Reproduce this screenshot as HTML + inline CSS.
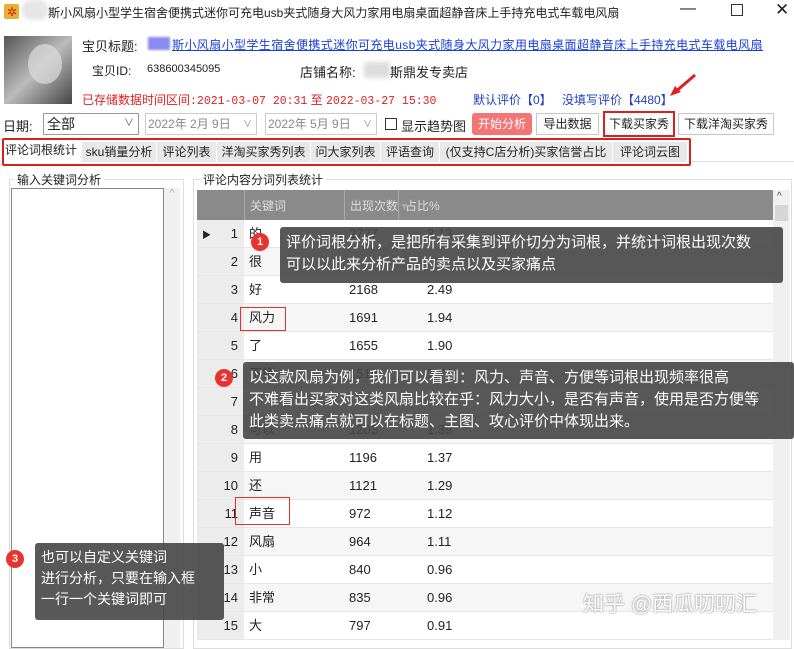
<!DOCTYPE html>
<html><head><meta charset="utf-8"><style>
*{box-sizing:border-box;margin:0;padding:0}
body{width:794px;height:636px;overflow:hidden;background:#fff;font-family:"Liberation Sans","Noto Sans CJK SC",sans-serif;font-size:12px;color:#222;position:relative}
.a{position:absolute;white-space:nowrap}
.btn{position:absolute;height:22px;border:1px solid #c8c8c8;background:#fdfdfd;text-align:center;line-height:20px;font-size:12px}
.tab{position:absolute;top:142px;height:20px;background:#e8e8e8;border-right:1px solid #fff;line-height:20px;font-size:12px;text-align:center}
.row{position:absolute;left:197px;width:576px;height:28px;border-bottom:1px solid #e6e6e6}
.row .n{position:absolute;left:0;width:47px;height:27px;background:#ececec;text-align:right;padding-right:6px;line-height:27px;font-size:13px}
.row .k{position:absolute;left:52px;line-height:27px;font-size:13px}
.row .c{position:absolute;left:152px;line-height:27px;font-size:13px}
.row .p{position:absolute;left:230px;line-height:27px;font-size:13px}
.tip{position:absolute;background:rgba(70,70,70,.9);color:#fff;font-size:15px;line-height:22px;border-radius:3px;padding:5px 6px}
.bd{position:absolute;width:18px;height:18px;border-radius:50%;background:#e8342e;color:#fff;font-size:11px;text-align:center;line-height:18px;font-weight:bold}
</style></head><body>
<div class="a" style="left:4px;top:4px;width:15px;height:15px;background:#e8b030;border-radius:2px"></div>
<div class="a" style="left:7px;top:5px;color:#d02020;font-size:12px">✲</div>
<div class="a" style="left:22px;top:0;width:26px;height:20px;background:#e6e6e6;border-radius:8px;filter:blur(2px)"></div>
<div class="a" style="left:48px;top:4px;font-size:12px">斯小风扇小型学生宿舍便携式迷你可充电usb夹式随身大风力家用电扇桌面超静音床上手持充电式车载电风扇</div>
<div class="a" style="left:680px;top:0;font-size:16px">—</div>
<div class="a" style="left:731px;top:4px;width:12px;height:12px;border:1px solid #333"></div>
<div class="a" style="left:775px;top:0;font-size:17px">✕</div>
<div class="a" style="left:4px;top:36px;width:68px;height:68px;background:linear-gradient(135deg,#555,#bbb 50%,#444);"></div>
<div class="a" style="left:28px;top:44px;width:34px;height:40px;border-radius:50%;background:#ddd;opacity:.7"></div>
<div class="a" style="left:82px;top:36px;font-size:13px">宝贝标题:</div>
<div class="a" style="left:148px;top:37px;width:22px;height:13px;background:#8a8af0;filter:blur(1px)"></div>
<div class="a" style="left:172px;top:36px;font-size:12px;letter-spacing:0.4px;color:#1a3ed8;text-decoration:underline">斯小风扇小型学生宿舍便携式迷你可充电usb夹式随身大风力家用电扇桌面超静音床上手持充电式车载电风扇</div>
<div class="a" style="left:92px;top:62px;font-size:12px">宝贝ID:</div>
<div class="a" style="left:147px;top:63px;font-size:11px">638600345095</div>
<div class="a" style="left:300px;top:62px;font-size:13px">店铺名称:</div>
<div class="a" style="left:364px;top:62px;width:26px;height:16px;background:#ddd;filter:blur(2px)"></div>
<div class="a" style="left:390px;top:62px;font-size:13px">斯鼎发专卖店</div>
<div class="a" style="left:82px;top:91px;font-size:12px;color:#e02020">已存储数据时间区间<span style="font-family:'Liberation Mono',monospace;font-size:11.5px">:2021-03-07 20:31</span> 至 <span style="font-family:'Liberation Mono',monospace;font-size:11.5px">2022-03-27 15:30</span></div>
<div class="a" style="left:473px;top:91px;font-size:12px;color:#2040c0">默认评价【0】</div>
<div class="a" style="left:562px;top:91px;font-size:12px;color:#2040c0">没填写评价【4480】</div>
<svg class="a" style="left:668px;top:72px" width="30" height="26"><line x1="27" y1="3" x2="6" y2="21" stroke="#e02020" stroke-width="3"/><polygon points="2,24 13,20 7,14" fill="#e02020"/></svg>
<div class="a" style="left:3px;top:116px;font-size:13px">日期:</div>
<div class="a" style="left:43px;top:113px;width:96px;height:22px;border:1px solid #999;padding-left:3px;line-height:20px;font-size:14px">全部<span style="position:absolute;right:4px;font-size:10px;color:#555">∨</span></div>
<div class="a" style="left:145px;top:113px;width:112px;height:22px;border:1px solid #ccc;color:#888;padding-left:2px;line-height:20px;font-size:12px">2022年 2月 9日<span style="position:absolute;right:4px;font-size:9px">∨</span></div>
<div class="a" style="left:265px;top:113px;width:112px;height:22px;border:1px solid #ccc;color:#888;padding-left:2px;line-height:20px;font-size:12px">2022年 5月 9日<span style="position:absolute;right:4px;font-size:9px">∨</span></div>
<div class="a" style="left:385px;top:118px;width:12px;height:12px;border:1px solid #333"></div>
<div class="a" style="left:401px;top:116px;font-size:13px">显示趋势图</div>
<div class="btn" style="left:472px;top:113px;width:60px;background:#f37575;color:#fff;border-color:#f37575;border-radius:3px">开始分析</div>
<div class="btn" style="left:536px;top:113px;width:63px">导出数据</div>
<div class="btn" style="left:603px;top:111px;width:72px;height:26px;border:2px solid #d82020;line-height:22px">下载买家秀</div>
<div class="btn" style="left:678px;top:113px;width:96px">下载洋淘买家秀</div>
<div class="a" style="left:0;top:161px;width:794px;height:1px;background:#ddd"></div>
<div class="tab" style="left:2px;width:79px;background:#fff;top:140px;height:22px">评论词根统计</div>
<div class="tab" style="left:82px;width:75px">sku销量分析</div>
<div class="tab" style="left:157px;width:60px">评论列表</div>
<div class="tab" style="left:217px;width:94px">洋淘买家秀列表</div>
<div class="tab" style="left:311px;width:70px">问大家列表</div>
<div class="tab" style="left:381px;width:59px">评语查询</div>
<div class="tab" style="left:440px;width:173px">(仅支持C店分析)买家信誉占比</div>
<div class="tab" style="left:613px;width:75px">评论词云图</div>
<div class="a" style="left:2px;top:138px;width:689px;height:28px;border:2px solid #d82020;border-radius:2px"></div>
<div class="a" style="left:9px;top:179px;width:175px;height:470px;border:1px solid #ddd"></div>
<div class="a" style="left:14px;top:171px;background:#fff;padding:0 3px;font-size:12px">输入关键词分析</div>
<div class="a" style="left:11px;top:188px;width:153px;height:460px;border:1px solid #888;background:#fff"></div>
<div class="a" style="left:164px;top:188px;width:16px;height:460px;background:#f0f0f0;color:#aaa;font-size:10px;text-align:center">^</div>
<div class="a" style="left:193px;top:179px;width:599px;height:470px;border:1px solid #ddd"></div>
<div class="a" style="left:200px;top:171px;background:#fff;padding:0 3px;font-size:12px">评论内容分词列表统计</div>
<div class="a" style="left:197px;top:190px;width:576px;height:30px;background:#8a8a8a"></div>
<div class="a" style="left:244px;top:190px;width:1px;height:30px;background:#aaa"></div>
<div class="a" style="left:344px;top:190px;width:1px;height:30px;background:#aaa"></div>
<div class="a" style="left:398px;top:190px;width:1px;height:30px;background:#aaa"></div>
<div class="a" style="left:250px;top:197px;color:#ddd;font-size:12px">关键词</div>
<div class="a" style="left:350px;top:197px;color:#ddd;font-size:12px">出现次数 <span style="color:#aaa">▾</span></div>
<div class="a" style="left:405px;top:197px;color:#ddd;font-size:12px">占比%</div>
<div class="a" style="left:773px;top:190px;width:17px;height:450px;background:#f0f0f0"></div>
<div class="a" style="left:775px;top:205px;width:13px;height:16px;background:#d6d6d6"></div>
<div class="a" style="left:777px;top:191px;font-size:10px;color:#444">^</div>

<div class="row" style="top:220px"><div class="n">1</div><div class="k">的</div><div class="c">2727</div><div class="p">3.13</div><span style="position:absolute;left:5px;top:8px;font-size:9px">▶</span></div>
<div class="row" style="top:248px;background:#f6f6f6"><div class="n">2</div><div class="k">很</div></div>
<div class="row" style="top:276px"><div class="n">3</div><div class="k">好</div><div class="c">2168</div><div class="p">2.49</div></div>
<div class="row" style="top:304px;background:#f6f6f6"><div class="n">4</div><div class="k">风力</div><div class="c">1691</div><div class="p">1.94</div></div>
<div class="row" style="top:332px"><div class="n">5</div><div class="k">了</div><div class="c">1655</div><div class="p">1.90</div></div>
<div class="row" style="top:360px;background:#f6f6f6"><div class="n">6</div><div class="k">不错</div><div class="c">1518</div><div class="p">1.74</div></div>
<div class="row" style="top:388px"><div class="n">7</div></div>
<div class="row" style="top:416px;background:#f6f6f6"><div class="n">8</div><div class="k">可以</div><div class="c">1203</div><div class="p">1.39</div></div>
<div class="row" style="top:444px"><div class="n">9</div><div class="k">用</div><div class="c">1196</div><div class="p">1.37</div></div>
<div class="row" style="top:472px;background:#f6f6f6"><div class="n">10</div><div class="k">还</div><div class="c">1121</div><div class="p">1.29</div></div>
<div class="row" style="top:500px"><div class="n">11</div><div class="k">声音</div><div class="c">972</div><div class="p">1.12</div></div>
<div class="row" style="top:528px;background:#f6f6f6"><div class="n">12</div><div class="k">风扇</div><div class="c">964</div><div class="p">1.11</div></div>
<div class="row" style="top:556px"><div class="n">13</div><div class="k">小</div><div class="c">840</div><div class="p">0.96</div></div>
<div class="row" style="top:584px;background:#f6f6f6"><div class="n">14</div><div class="k">非常</div><div class="c">835</div><div class="p">0.96</div></div>
<div class="row" style="top:612px"><div class="n">15</div><div class="k">大</div><div class="c">797</div><div class="p">0.91</div></div>
<div class="a" style="left:240px;top:307px;width:46px;height:24px;border:1px solid #e03030"></div>
<div class="a" style="left:235px;top:497px;width:55px;height:28px;border:1px solid #e03030"></div>

<div class="a" style="left:583px;top:588px;font-size:21px;color:#fff;text-shadow:0 0 2px #999,0 0 1px #888">知乎 @西瓜叨叨汇</div>

<div class="tip" style="left:280px;top:227px;width:503px;height:56px">评价词根分析，是把所有采集到评价切分为词根，并统计词根出现次数<br>可以以此来分析产品的卖点以及买家痛点</div>
<div class="bd" style="left:251px;top:233px">1</div>
<div class="tip" style="left:243px;top:362px;width:551px;height:77px">以这款风扇为例，我们可以看到：风力、声音、方便等词根出现频率很高<br>不难看出买家对这类风扇比较在乎：风力大小，是否有声音，使用是否方便等<br>此类卖点痛点就可以在标题、主图、攻心评价中体现出来。</div>
<div class="bd" style="left:215px;top:369px">2</div>
<div class="tip" style="left:35px;top:543px;width:189px;height:77px;font-size:14px;line-height:21px;padding:4px 6px">也可以自定义关键词<br>进行分析，只要在输入框<br>一行一个关键词即可</div>
<div class="bd" style="left:6px;top:550px">3</div>
</body></html>
